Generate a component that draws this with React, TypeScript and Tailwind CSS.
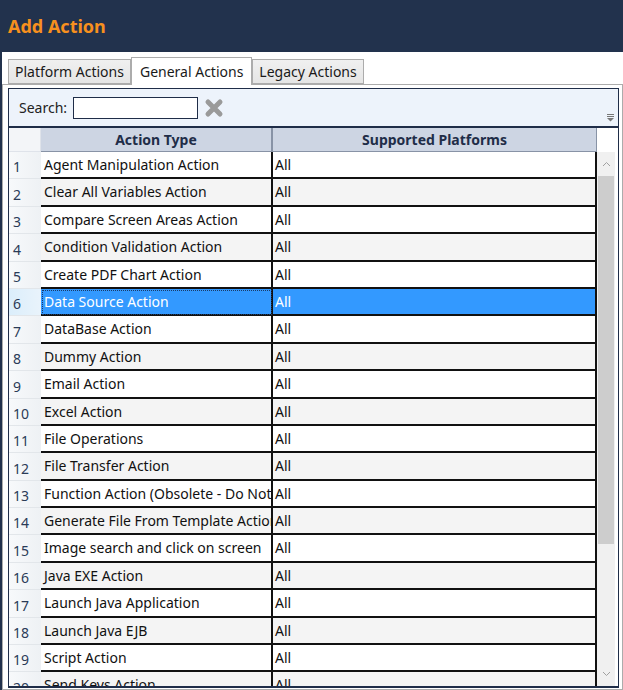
import React from 'react';

const actions = [
  'Agent Manipulation Action',
  'Clear All Variables Action',
  'Compare Screen Areas Action',
  'Condition Validation Action',
  'Create PDF Chart Action',
  'Data Source Action',
  'DataBase Action',
  'Dummy Action',
  'Email Action',
  'Excel Action',
  'File Operations',
  'File Transfer Action',
  'Function Action (Obsolete - Do Not Use)',
  'Generate File From Template Action',
  'Image search and click on screen',
  'Java EXE Action',
  'Launch Java Application',
  'Launch Java EJB',
  'Script Action',
  'Send Keys Action',
];

const font = { fontFamily: '"Noto Sans", "Open Sans", sans-serif' };

function Tab({ label, active }: { label: string; active?: boolean }) {
  if (active) {
    return (
      <div className="relative z-10 -mb-px flex h-[28px] items-center border border-b-0 border-[#acacac] bg-white px-[8px] text-[14px] text-[#1a1a1a]">
        {label}
      </div>
    );
  }
  return (
    <div className="flex h-[25px] items-center border border-[#acacac] bg-gradient-to-b from-[#f0f0f0] to-[#e5e5e5] px-[6px] text-[14px] text-[#1a1a1a]">
      {label}
    </div>
  );
}

function Row({ n, name, selected }: { n: number; name: string; selected?: boolean }) {
  const alt = n % 2 === 0;
  const cell = selected
    ? 'bg-[#3399ff] text-white'
    : alt
      ? 'bg-[#f4f4f4] text-[#111]'
      : 'bg-white text-[#111]';
  return (
    <div className="flex h-[27.4px] shrink-0">
      <div
        className={`flex w-[32px] shrink-0 items-end pb-[1px] pl-[4px] text-[14px] text-[#2a3b57] ${
          selected ? 'bg-gradient-to-r from-[#dbeefb] to-[#e9f3fb]' : 'bg-gradient-to-r from-[#f7f9fb] to-[#eef1f4]'
        } border-b border-[#e2e6ea]`}
      >
        {n}
      </div>
      <div
        className={`w-[232px] shrink-0 overflow-hidden whitespace-nowrap border-b-2 border-r-2 border-[#111] pl-[3px] text-[14px] leading-[25px] ${cell} ${
          selected ? 'outline-1 -outline-offset-2 outline-dotted outline-[#1a3a66]' : ''
        }`}
      >
        {name}
      </div>
      <div className={`w-[324px] shrink-0 border-b-2 border-r-2 border-[#111] pl-[2px] text-[14px] leading-[25px] ${cell}`}>
        All
      </div>
    </div>
  );
}

export default function App() {
  return (
    <div className="flex h-[690px] w-[623px] flex-col overflow-hidden border-l-2 border-t border-[#22324d] bg-white" style={font}>
      <div className="flex h-[51px] shrink-0 items-center bg-[#22324d] pl-[6px]">
        <span className="text-[18px] font-bold text-[#f7901e]">Add Action</span>
      </div>

      <div className="flex h-[32px] shrink-0 items-end pl-[6px] pt-[5px]">
        <Tab label="Platform Actions" />
        <Tab label="General Actions" active />
        <Tab label="Legacy Actions" />
      </div>

      <div className="flex min-h-0 flex-1 flex-col border border-[#acacac] pb-px pl-[5px] pr-[3px] pt-[3px]">
        <div className="flex min-h-0 flex-1 flex-col overflow-hidden border border-b-2 border-[#1f2d48]">
          <div className="relative flex h-[39px] shrink-0 items-center border-b-2 border-[#1f2d48] bg-[#edf3fb] pl-[10px]">
            <span className="text-[14px] text-[#222]">Search:</span>
            <div className="ml-[6px] h-[22px] w-[125px] border border-[#1f2d48] bg-white" />
            <svg className="ml-[6px]" width="20" height="20" viewBox="0 0 20 20">
              <path d="M4 4 L16 16 M16 4 L4 16" stroke="#9a9a9a" strokeWidth="5" strokeLinecap="round" />
            </svg>
            <svg className="absolute bottom-[4px] right-[3px]" width="9" height="9" viewBox="0 0 9 9">
              <rect x="1" y="1" width="7" height="1" fill="#777" />
              <rect x="1" y="3" width="7" height="1" fill="#777" />
              <path d="M1 5 L8 5 L4.5 8.5 Z" fill="#777" />
            </svg>
          </div>

          <div className="flex min-h-0 flex-1 overflow-hidden">
            <div className="flex min-h-0 flex-col overflow-hidden">
              <div className="flex h-[24px] shrink-0">
                <div className="w-[32px] shrink-0 border-b border-r border-[#dfe3ea] bg-[#f3f5f8]" />
                <div className="flex w-[232px] shrink-0 items-center justify-center border-b border-r-2 border-[#8893a6] bg-[#cdd5e3] text-[14px] font-bold text-[#1f2d48]">
                  Action Type
                </div>
                <div className="flex w-[324px] shrink-0 items-center justify-center border-b border-r border-[#8893a6] bg-[#cdd5e3] text-[14px] font-bold text-[#1f2d48]">
                  Supported Platforms
                </div>
              </div>
              {actions.map((a, i) => (
                <Row key={a} n={i + 1} name={a} selected={i === 5} />
              ))}
            </div>

            <div className="flex w-[18px] shrink-0 flex-col">
              <div className="h-[24px] shrink-0 bg-white" />
              <div className="flex h-[24px] shrink-0 items-center justify-center bg-[#f0f0f0]">
                <svg width="9" height="6" viewBox="0 0 9 6">
                  <path d="M1 5 L4.5 1.5 L8 5" fill="none" stroke="#a0a0a0" strokeWidth="1" />
                </svg>
              </div>
              <div className="flex flex-1 flex-col bg-[#f0f0f0] px-[1px]">
                <div className="h-[368px] bg-[#cdcdcd]" />
              </div>
              <div className="flex h-[24px] shrink-0 items-center justify-center bg-[#f0f0f0]">
                <svg width="9" height="6" viewBox="0 0 9 6">
                  <path d="M1 1 L4.5 4.5 L8 1" fill="none" stroke="#a0a0a0" strokeWidth="1" />
                </svg>
              </div>
            </div>
          </div>
        </div>
      </div>
    </div>
  );
}
